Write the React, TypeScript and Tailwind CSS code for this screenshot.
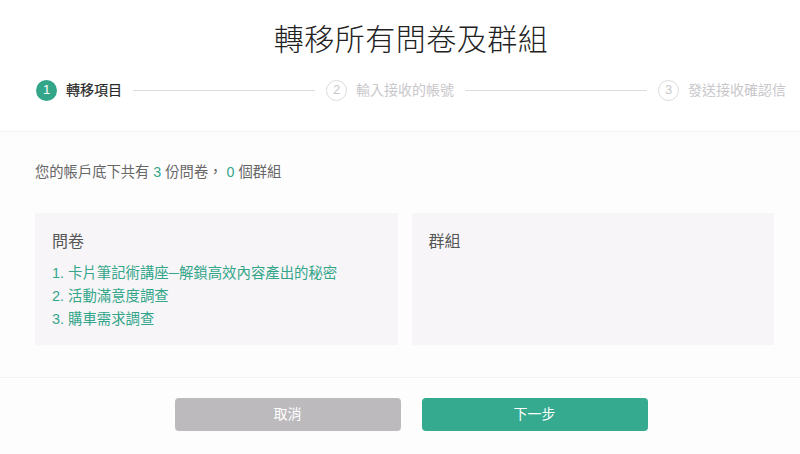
const surveys = ['卡片筆記術講座─解鎖高效內容產出的秘密', '活動滿意度調查', '購車需求調查'];

const steps = [
  { n: 1, label: '轉移項目', active: true },
  { n: 2, label: '輸入接收的帳號', active: false },
  { n: 3, label: '發送接收確認信', active: false },
];

function Step({ n, label, active }: { n: number; label: string; active: boolean }) {
  return (
    <div className="flex shrink-0 items-center gap-[9px]">
      <span
        className={
          active
            ? 'flex h-[21px] w-[21px] items-center justify-center rounded-full bg-[#33a68a] text-[13px] text-white'
            : 'flex h-[21px] w-[21px] items-center justify-center rounded-full border border-[#dcdadd] text-[13px] text-[#c9c7ca]'
        }
      >
        {n}
      </span>
      <span className={active ? 'text-[14px] text-[#2a2a2a] [-webkit-text-stroke:0.2px_#2a2a2a]' : 'text-[14px] text-[#c9c7cb]'}>
        {label}
      </span>
    </div>
  );
}

export default function App() {
  return (
    <div
      className="flex h-[454px] w-[800px] flex-col overflow-hidden bg-white"
      style={{ fontFamily: '"Liberation Sans", "Noto Sans CJK TC", sans-serif' }}
    >
      {/* header + stepper */}
      <header className="border-b border-[#f3f1f4] pt-[20px] pb-[29px]">
        <h1 className="pl-[22px] text-center text-[30px] font-light leading-[40px] tracking-[0.5px] text-[#222]">
          轉移所有問卷及群組
        </h1>
        <div className="mt-[18px] flex h-[24px] items-center pl-[36px] pr-[14px]">
          <Step {...steps[0]} />
          <div className="mx-[11px] h-px flex-1 bg-[#dddbde]" />
          <Step {...steps[1]} />
          <div className="mx-[11px] h-px flex-1 bg-[#dddbde]" />
          <Step {...steps[2]} />
        </div>
      </header>

      <main className="border-b border-[#f3f1f4] bg-[#fefdfe] pl-[35px] pr-[26px] pt-[30px] pb-[32px]">
        <p className="text-[14.3px] leading-[20px] text-[#666]">
          您的帳戶底下共有 <span className="text-[#33a68a]">3</span> 份問卷， <span className="text-[#33a68a]">0</span> 個群組
        </p>
        <div className="mt-[31px] grid grid-cols-2 gap-[14px]">
          <section className="h-[132px] bg-[#f7f5f8] pl-[17px] pt-[17px]">
            <h2 className="text-[16px] leading-[24px] text-[#555]">問卷</h2>
            <ol className="mt-[8px] text-[14.4px] leading-[23px] text-[#33a68a]">
              {surveys.map((t, i) => (
                <li key={t}>
                  {i + 1}. {t}
                </li>
              ))}
            </ol>
          </section>
          <section className="h-[132px] bg-[#f7f5f8] pl-[17px] pt-[17px]">
            <h2 className="text-[16px] leading-[24px] text-[#555]">群組</h2>
          </section>
        </div>
      </main>

      <footer className="flex flex-1 items-start justify-center gap-[21px] bg-[#fefdfe] pl-[22px] pt-[20px]">
        <button className="h-[33px] w-[226px] rounded-[4px] bg-[#bcbabd] text-[14px] text-white">取消</button>
        <button className="h-[33px] w-[226px] rounded-[4px] bg-[#35aa8e] text-[14px] text-white">下一步</button>
      </footer>
    </div>
  );
}
